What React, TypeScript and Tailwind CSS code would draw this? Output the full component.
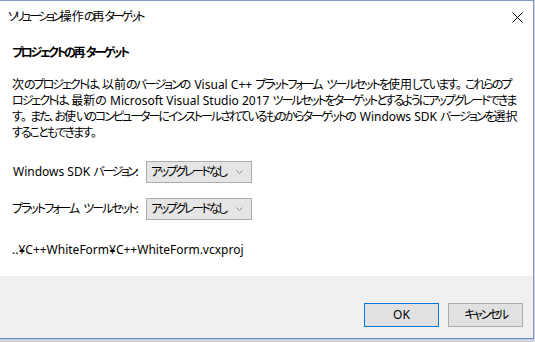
import React from "react";

const KANA = /([\u3040-\u30FF\u30FC]+)/;

function J({ t, k = "k" }: { t: string; k?: "k" | "p" | "t" }) {
  const parts = t.split(KANA);
  return (
    <>
      {parts.map((p, i) => {
        if (p === "") return null;
        if (KANA.test(p)) {
          const next = parts[i + 1] ?? "";
          const pad = next.startsWith(" ");
          const cls =
            k === "t"
              ? "tracking-[-2.9px]"
              : k === "k"
              ? pad
                ? "tracking-[-2.4px] mr-[2px]"
                : "tracking-[-2.4px]"
              : pad
              ? "tracking-[-2px] mr-[2px]"
              : "tracking-[-2px]";
          return (
            <span key={i} className={cls}>
              {p}
            </span>
          );
        }
        return <span key={i}>{p}</span>;
      })}
    </>
  );
}

const Chevron = () => (
  <svg width="7" height="4" viewBox="0 0 7 4" className="shrink-0">
    <path d="M0.5 0.5 L3.5 3.5 L6.5 0.5" fill="none" stroke="#8a8a8a" strokeWidth="1" />
  </svg>
);

const Combo = () => (
  <div className="w-[106px] h-[22px] shrink-0 border border-[#acacac] bg-[#e5e5e5] flex items-center justify-between pl-[4px] pr-[8px] text-[12px] text-black whitespace-nowrap">
    <span>
      <J t="アップグレードなし" />
    </span>
    <Chevron />
  </div>
);

export default function App() {
  return (
    <div className="w-[535px] h-[342px] flex flex-col bg-[#cfd3dc] font-['Noto_Sans','Noto_Sans_CJK_JP',sans-serif] [font-feature-settings:'palt'] text-black">
      <div className="flex flex-col w-[534px] h-[339px] bg-white border-t border-r border-[#7d9bc8]">
        {/* title bar */}
        <div className="h-[32px] flex items-center justify-between pl-[8px] pr-[10px]">
          <span className="text-[12px] leading-[16px] whitespace-nowrap">
            <J k="t" t="ソリューション操作の再ターゲット" />
          </span>
          <svg width="11" height="11" viewBox="0 0 11 11">
            <path d="M0.5 0.5 L10.5 10.5 M10.5 0.5 L0.5 10.5" stroke="#111" strokeWidth="1" />
          </svg>
        </div>
        {/* content */}
        <div className="h-[243px] flex flex-col pl-[12px] pr-[10px]">
          <div className="mt-[11px] h-[18px] leading-[18px] text-[12px] font-bold whitespace-nowrap">
            <J t="プロジェクトの再ターゲット" />
          </div>
          <p className="mt-[15px] text-[12px] leading-[16px] whitespace-nowrap">
            <J k="p" t="次のプロジェクトは、以前のバージョンの Visual C++ プラットフォーム ツールセットを使用しています。 これらのプ" />
            <br />
            <J k="p" t="ロジェクトは、最新の Microsoft Visual Studio 2017 ツールセットをターゲットとするようにアップグレードできま" />
            <br />
            <J k="p" t="す。 また、お使いのコンピューターにインストールされているものからターゲットの Windows SDK バージョンを選択" />
            <br />
            <J k="p" t="することもできます。" />
          </p>
          <div className="mt-[20px] flex items-center">
            <span className="w-[134px] shrink-0 text-[12px] pl-[1px] whitespace-nowrap">
              <J t="Windows SDK バージョン:" />
            </span>
            <Combo />
          </div>
          <div className="mt-[15px] flex items-center">
            <span className="w-[134px] shrink-0 text-[12px] whitespace-nowrap">
              <J k="p" t="プラットフォーム ツールセット:" />
            </span>
            <Combo />
          </div>
          <div className="mt-[22px] text-[12px] leading-[16px] whitespace-nowrap">..¥C++WhiteForm¥C++WhiteForm.vcxproj</div>
        </div>
        {/* footer */}
        <div className="flex-1 bg-[#f0f0f0] flex justify-end items-start pt-[27px] pr-[10px] gap-[9px] border-b border-[#5d86c4]">
          <button className="w-[75px] h-[24px] border border-[#0078d7] bg-[#e1e1e1] text-[12px] flex items-center justify-center">OK</button>
          <button className="w-[75px] h-[24px] border border-[#adadad] bg-[#e1e1e1] text-[12px] flex items-center justify-center whitespace-nowrap">
            <J t="キャンセル" />
          </button>
        </div>
      </div>
    </div>
  );
}
